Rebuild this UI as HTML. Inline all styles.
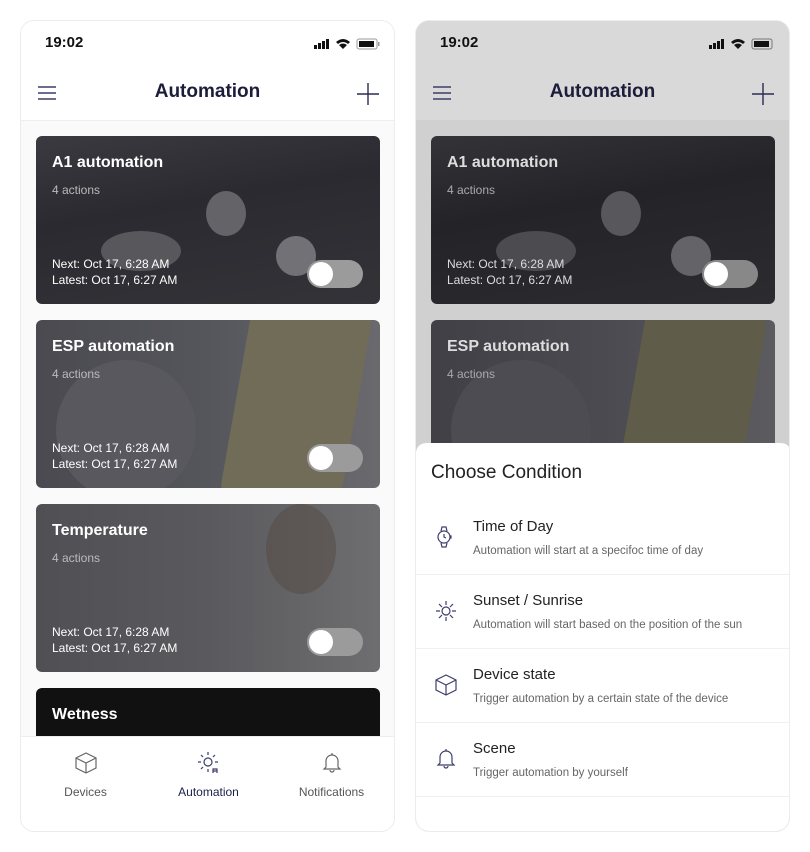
<!DOCTYPE html>
<html><head><meta charset="utf-8"><style>
*{box-sizing:border-box;margin:0;padding:0}
body{width:810px;height:852px;background:#fff;font-family:"Liberation Sans",sans-serif;position:relative;overflow:hidden}
.ph{position:absolute;top:20px;width:375px;height:812px;border:1px solid #ececec;border-radius:14px;overflow:hidden;background:#fafafa}
.status{position:absolute;left:0;top:0;width:100%;height:100px;background:#fff;border-bottom:1px solid #eee}
.time{position:absolute;left:24px;top:13px;font-size:15px;font-weight:bold;color:#111}
.title{position:absolute;left:0;width:100%;top:60px;text-align:center;font-size:19px;font-weight:bold;color:#1c1d3a}
.card{position:absolute;left:15px;width:344px;height:168px;border-radius:6px;overflow:hidden;color:#fff}
.card .n{position:absolute;left:16px;top:18px;font-size:16px;font-weight:bold}
.card .a{position:absolute;left:16px;top:47px;font-size:12px;color:#bbb}
.card .d{position:absolute;left:16px;top:120px;font-size:12px;line-height:16px}
.tg{position:absolute;left:271px;top:124px;width:56px;height:28px;border-radius:14px;background:#9b9b9b}
.tg:after{content:"";position:absolute;left:2px;top:2px;width:24px;height:24px;border-radius:50%;background:#fff}
.blob{position:absolute;border-radius:50%}
.tab{position:absolute;left:0;top:715px;width:100%;height:97px;background:#fff;border-top:1px solid #eee}
.ti{position:absolute;top:0;width:125px;text-align:center;font-size:12px;color:#555}
.ti svg{display:block;margin:14px auto 10px}
.sheet{position:absolute;left:0;top:422px;width:375px;height:390px;background:#fff;border-radius:10px 10px 0 0}
.it{position:absolute;left:0;width:375px;height:74px;border-bottom:1px solid #f0f0f0}
.it .h{position:absolute;left:57px;top:17px;font-size:15px;color:#222}
.it .s{position:absolute;left:57px;top:44px;font-size:11.5px;color:#666}
.it svg{position:absolute;left:18px;top:24px}
</style></head><body>

<div class="ph" style="left:20px">
  <div class="status">
    <div class="time">19:02</div>
    <svg style="position:absolute;left:293px;top:17px" width="70" height="14"><rect x="0" y="7" width="3" height="4" fill="#111"/><rect x="4" y="5" width="3" height="6" fill="#111"/><rect x="8" y="3" width="3" height="8" fill="#111"/><rect x="12" y="1" width="3" height="10" fill="#111"/><path d="M22 4 Q29 -2 36 4 L34 6 Q29 2 24 6Z M25 7 Q29 4 33 7 L29 11Z" fill="#111"/><rect x="43" y="1" width="20" height="10" rx="2" fill="none" stroke="#999"/><rect x="45" y="3" width="15" height="6" fill="#111"/><rect x="64" y="4" width="1.5" height="4" fill="#999"/></svg>
    <svg style="position:absolute;left:17px;top:65px" width="20" height="14"><path d="M0 1H18M0 7H18M0 13H18" stroke="#3d3d6b" stroke-width="1.4"/></svg>
    <div class="title">Automation</div>
    <svg style="position:absolute;left:336px;top:62px" width="22" height="22"><path d="M11 0V22M0 11H22" stroke="#2a2a55" stroke-width="1.4"/></svg>
  </div>
  <div class="card" style="top:115px;background:linear-gradient(170deg,#3a3a40,#2a2a30 40%,#333338)">
    <div class="blob" style="left:65px;top:95px;width:80px;height:40px;background:#58585c"></div>
    <div class="blob" style="left:170px;top:55px;width:40px;height:45px;background:#646468"></div>
    <div class="blob" style="left:240px;top:100px;width:40px;height:40px;background:#727276"></div>
    <div class="n">A1 automation</div><div class="a">4 actions</div>
    <div class="d">Next: Oct 17, 6:28 AM<br>Latest: Oct 17, 6:27 AM</div><div class="tg"></div>
  </div>
  <div class="card" style="top:299px;background:linear-gradient(90deg,#4a4a50,#55565c 50%,#6a6a6e)">
    <div class="blob" style="left:20px;top:40px;width:140px;height:140px;background:#58585e"></div>
    <div style="position:absolute;left:200px;top:-20px;width:120px;height:210px;background:#706c58;border-radius:16px;transform:rotate(10deg)"></div>
    <div class="n">ESP automation</div><div class="a">4 actions</div>
    <div class="d">Next: Oct 17, 6:28 AM<br>Latest: Oct 17, 6:27 AM</div><div class="tg"></div>
  </div>
  <div class="card" style="top:483px;background:linear-gradient(90deg,#505054,#5a5a5e 50%,#6e6e70)">
    <div class="blob" style="left:230px;top:0px;width:70px;height:90px;background:#54484280"></div>
    <div class="n">Temperature</div><div class="a">4 actions</div>
    <div class="d">Next: Oct 17, 6:28 AM<br>Latest: Oct 17, 6:27 AM</div><div class="tg"></div>
  </div>
  <div class="card" style="top:667px;background:#111"><div class="n">Wetness</div></div>
  <div class="tab">
    <div class="ti" style="left:2px"><svg width="24" height="24" viewBox="0 0 24 24" fill="none" stroke="#666" stroke-width="1.2"><path d="M12 2L22 7V17L12 22L2 17V7Z M2 7L12 12L22 7 M12 12V22"/></svg>Devices</div>
    <div class="ti" style="left:125px;color:#1c1d4a"><svg width="24" height="24" viewBox="0 0 24 24" fill="none" stroke="#3d3d6b" stroke-width="1.2"><circle cx="11" cy="11" r="4"/><path d="M11 1V4M1 11H4M18 11H21M4 4L6 6M18 4L16 6M4 18L6 16M11 18V21"/><path d="M16 22V18H20V22M16 20H20"/></svg>Automation</div>
    <div class="ti" style="left:248px"><svg width="24" height="24" viewBox="0 0 24 24" fill="none" stroke="#666" stroke-width="1.2"><path d="M12 2V4M6 16V10A6 6 0 0 1 18 10V16L20 18H4Z M10 19A2 2 0 0 0 14 19"/></svg>Notifications</div>
  </div>
</div>

<div class="ph" style="left:415px;background:#d0d0d0">
  <div class="status" style="background:#d9d9d9;border-color:#d0d0d0">
    <div class="time">19:02</div>
    <svg style="position:absolute;left:293px;top:17px" width="70" height="14"><rect x="0" y="7" width="3" height="4" fill="#111"/><rect x="4" y="5" width="3" height="6" fill="#111"/><rect x="8" y="3" width="3" height="8" fill="#111"/><rect x="12" y="1" width="3" height="10" fill="#111"/><path d="M22 4 Q29 -2 36 4 L34 6 Q29 2 24 6Z M25 7 Q29 4 33 7 L29 11Z" fill="#111"/><rect x="43" y="1" width="20" height="10" rx="2" fill="none" stroke="#777"/><rect x="45" y="3" width="15" height="6" fill="#111"/></svg>
    <svg style="position:absolute;left:17px;top:65px" width="20" height="14"><path d="M0 1H18M0 7H18M0 13H18" stroke="#3d3d6b" stroke-width="1.4"/></svg>
    <div class="title">Automation</div>
    <svg style="position:absolute;left:336px;top:62px" width="22" height="22"><path d="M11 0V22M0 11H22" stroke="#2a2a55" stroke-width="1.4"/></svg>
  </div>
  <div class="card" style="top:115px;background:linear-gradient(170deg,#333338,#242428 40%,#2c2c30)">
    <div class="blob" style="left:65px;top:95px;width:80px;height:40px;background:#4c4c50"></div>
    <div class="blob" style="left:170px;top:55px;width:40px;height:45px;background:#58585c"></div>
    <div class="blob" style="left:240px;top:100px;width:40px;height:40px;background:#646468"></div>
    <div class="n" style="color:#ddd">A1 automation</div><div class="a" style="color:#aaa">4 actions</div>
    <div class="d" style="color:#ddd">Next: Oct 17, 6:28 AM<br>Latest: Oct 17, 6:27 AM</div><div class="tg" style="background:#888"></div>
  </div>
  <div class="card" style="top:299px;background:linear-gradient(90deg,#404046,#4a4a50 50%,#5c5c60)">
    <div class="blob" style="left:20px;top:40px;width:140px;height:140px;background:#4c4c52"></div>
    <div style="position:absolute;left:200px;top:-20px;width:120px;height:210px;background:#605c4a;border-radius:16px;transform:rotate(10deg)"></div>
    <div class="n" style="color:#ddd">ESP automation</div><div class="a" style="color:#aaa">4 actions</div>
  </div>
  <div class="sheet">
    <div style="position:absolute;left:15px;top:19px;font-size:19px;color:#222">Choose Condition</div>
    <div class="it" style="top:58px"><svg width="22" height="24" viewBox="0 0 22 24" fill="none" stroke="#3d3d6b" stroke-width="1.2"><circle cx="10" cy="12" r="6"/><path d="M7 6L8 2H12L13 6M7 18L8 22H12L13 18M10 9V12L12 13M16 11H17V13H16"/></svg><div class="h">Time of Day</div><div class="s">Automation will start at a specifoc time of day</div></div>
    <div class="it" style="top:132px"><svg width="24" height="24" viewBox="0 0 24 24" fill="none" stroke="#3d3d6b" stroke-width="1.2"><circle cx="12" cy="12" r="4"/><path d="M12 2V6M12 18V22M2 12H6M18 12H22M5 5L8 8M19 5L16 8M5 19L8 16M19 19L16 16"/></svg><div class="h">Sunset / Sunrise</div><div class="s">Automation will start based on the position of the sun</div></div>
    <div class="it" style="top:206px"><svg width="24" height="24" viewBox="0 0 24 24" fill="none" stroke="#3d3d6b" stroke-width="1.2"><path d="M12 2L22 7V17L12 22L2 17V7Z M2 7L12 12L22 7 M12 12V22"/></svg><div class="h">Device state</div><div class="s">Trigger automation by a certain state of the device</div></div>
    <div class="it" style="top:280px"><svg width="24" height="24" viewBox="0 0 24 24" fill="none" stroke="#3d3d6b" stroke-width="1.2"><path d="M12 2V4M6 16V10A6 6 0 0 1 18 10V16L20 18H4Z M10 19A2 2 0 0 0 14 19"/></svg><div class="h">Scene</div><div class="s">Trigger automation by yourself</div></div>
  </div>
</div>
</body></html>
